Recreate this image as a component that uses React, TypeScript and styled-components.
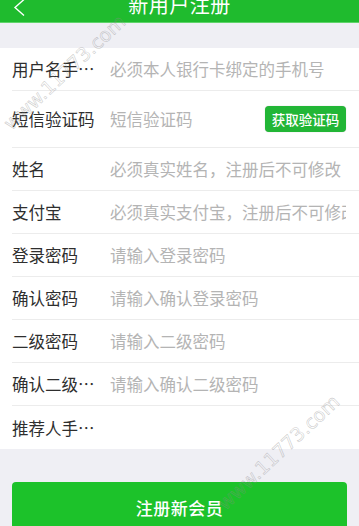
import React, { FC } from "react";
import styled, { createGlobalStyle } from "styled-components";

const GlobalStyle = createGlobalStyle`
    html, body {
        margin: 0;
        padding: 0;
        background: #efeff4;
    }
    body {
        font-family: "Noto Sans CJK SC", "Noto Sans", sans-serif;
    }
    * {
        box-sizing: border-box;
    }
`;

const green = "#1fbb2e";

interface Field {
    label: string;
    placeholder?: string;
    type?: string;
    withCode?: boolean;
}

const fields: Field[] = [
    { label: "用户名手机号", placeholder: "必须本人银行卡绑定的手机号" },
    { label: "短信验证码", placeholder: "短信验证码", withCode: true },
    { label: "姓名", placeholder: "必须真实姓名，注册后不可修改" },
    { label: "支付宝", placeholder: "必须真实支付宝，注册后不可修改" },
    { label: "登录密码", placeholder: "请输入登录密码", type: "password" },
    { label: "确认密码", placeholder: "请输入确认登录密码", type: "password" },
    { label: "二级密码", placeholder: "请输入二级密码", type: "password" },
    { label: "确认二级密码", placeholder: "请输入确认二级密码", type: "password" },
    { label: "推荐人手机号" },
];

const Page = styled.div`
    position: relative;
    width: 359px;
    height: 526px;
    overflow: hidden;
    background: #efeff4;
    display: flex;
    flex-direction: column;
`;

const Header = styled.header`
    flex: 0 0 23px;
    background: ${green};
    border-bottom: 1px solid #5fd46a;
    display: flex;
    align-items: flex-end;
    justify-content: center;
    overflow: hidden;
    position: relative;
`;

const Title = styled.h1`
    margin: 0;
    height: 34px;
    line-height: 34px;
    font-size: 20px;
    font-weight: 400;
    color: #ffffff;
    letter-spacing: 0.5px;
`;

const Back = styled.svg`
    position: absolute;
    left: 13px;
    top: -1px;
`;

const Band = styled.div`
    flex: 0 0 25px;
`;

const Form = styled.div`
    background: #ffffff;
    display: flex;
    flex-direction: column;
`;

const Row = styled.div<{ $tall?: boolean; $last?: boolean }>`
    height: ${(p) => (p.$tall ? 57 : 43)}px;
    margin-left: 12px;
    padding-right: 13px;
    display: flex;
    align-items: center;
    border-bottom: ${(p) => (p.$last ? "none" : "1px solid #ececec")};
`;

const Label = styled.label`
    flex: 0 0 83px;
    font-size: 16.5px;
    color: #2e2e2e;
    white-space: nowrap;
    overflow: hidden;
    text-overflow: ellipsis;
`;

const Input = styled.input`
    flex: 1;
    min-width: 0;
    margin-left: 15px;
    border: none;
    outline: none;
    padding: 0;
    background: transparent;
    font-family: inherit;
    font-size: 16.5px;
    color: #333;
    &::placeholder {
        color: #b4b4b4;
    }
`;

const CodeButton = styled.button`
    flex: 0 0 81px;
    height: 26px;
    border: none;
    border-radius: 4px;
    background: #22b636;
    color: #ffffff;
    font-family: inherit;
    font-size: 13.5px;
    font-weight: 500;
    padding: 0;
    box-shadow: 0 0 1px rgba(0, 0, 0, 0.3);
`;

const Footer = styled.div`
    padding: 33px 12px 0;
`;

const Submit = styled.button`
    width: 100%;
    height: 50px;
    border: none;
    border-radius: 4px;
    background: #1cc22a;
    color: #ffffff;
    font-family: inherit;
    font-size: 17px;
    font-weight: 500;
    letter-spacing: 0.5px;
`;

const Watermark = styled.div<{ $x: number; $y: number }>`
    position: absolute;
    left: ${(p) => p.$x}px;
    top: ${(p) => p.$y}px;
    font-family: "DejaVu Sans", sans-serif;
    font-size: 19px;
    color: transparent;
    -webkit-text-stroke: 0.6px rgba(140, 140, 140, 0.45);
    transform: rotate(-43deg);
    transform-origin: left bottom;
    pointer-events: none;
    white-space: nowrap;
`;

const FieldRow: FC<{ field: Field; index: number }> = ({ field, index }) => (
    <Row $tall={field.withCode} $last={index === fields.length - 1}>
        <Label>{field.label}</Label>
        <Input type={field.type || "text"} placeholder={field.placeholder} />
        {field.withCode && <CodeButton>获取验证码</CodeButton>}
    </Row>
);

const App: FC = () => {
    return (
        <Page>
            <GlobalStyle />
            <Header>
                <Back width="12" height="17" viewBox="0 0 12 17">
                    <path d="M11 0.5 L2 8.5 L11 16.5" fill="none" stroke="#ffffff" strokeWidth="1.4" />
                </Back>
                <Title>新用户注册</Title>
            </Header>
            <Band />
            <Form>
                {fields.map((f, i) => (
                    <FieldRow key={i} field={f} index={i} />
                ))}
            </Form>
            <Footer>
                <Submit>注册新会员</Submit>
            </Footer>
            <Watermark $x={14} $y={112}>www.11773.com</Watermark>
            <Watermark $x={228} $y={492}>www.11773.com</Watermark>
        </Page>
    );
};

export default App;
